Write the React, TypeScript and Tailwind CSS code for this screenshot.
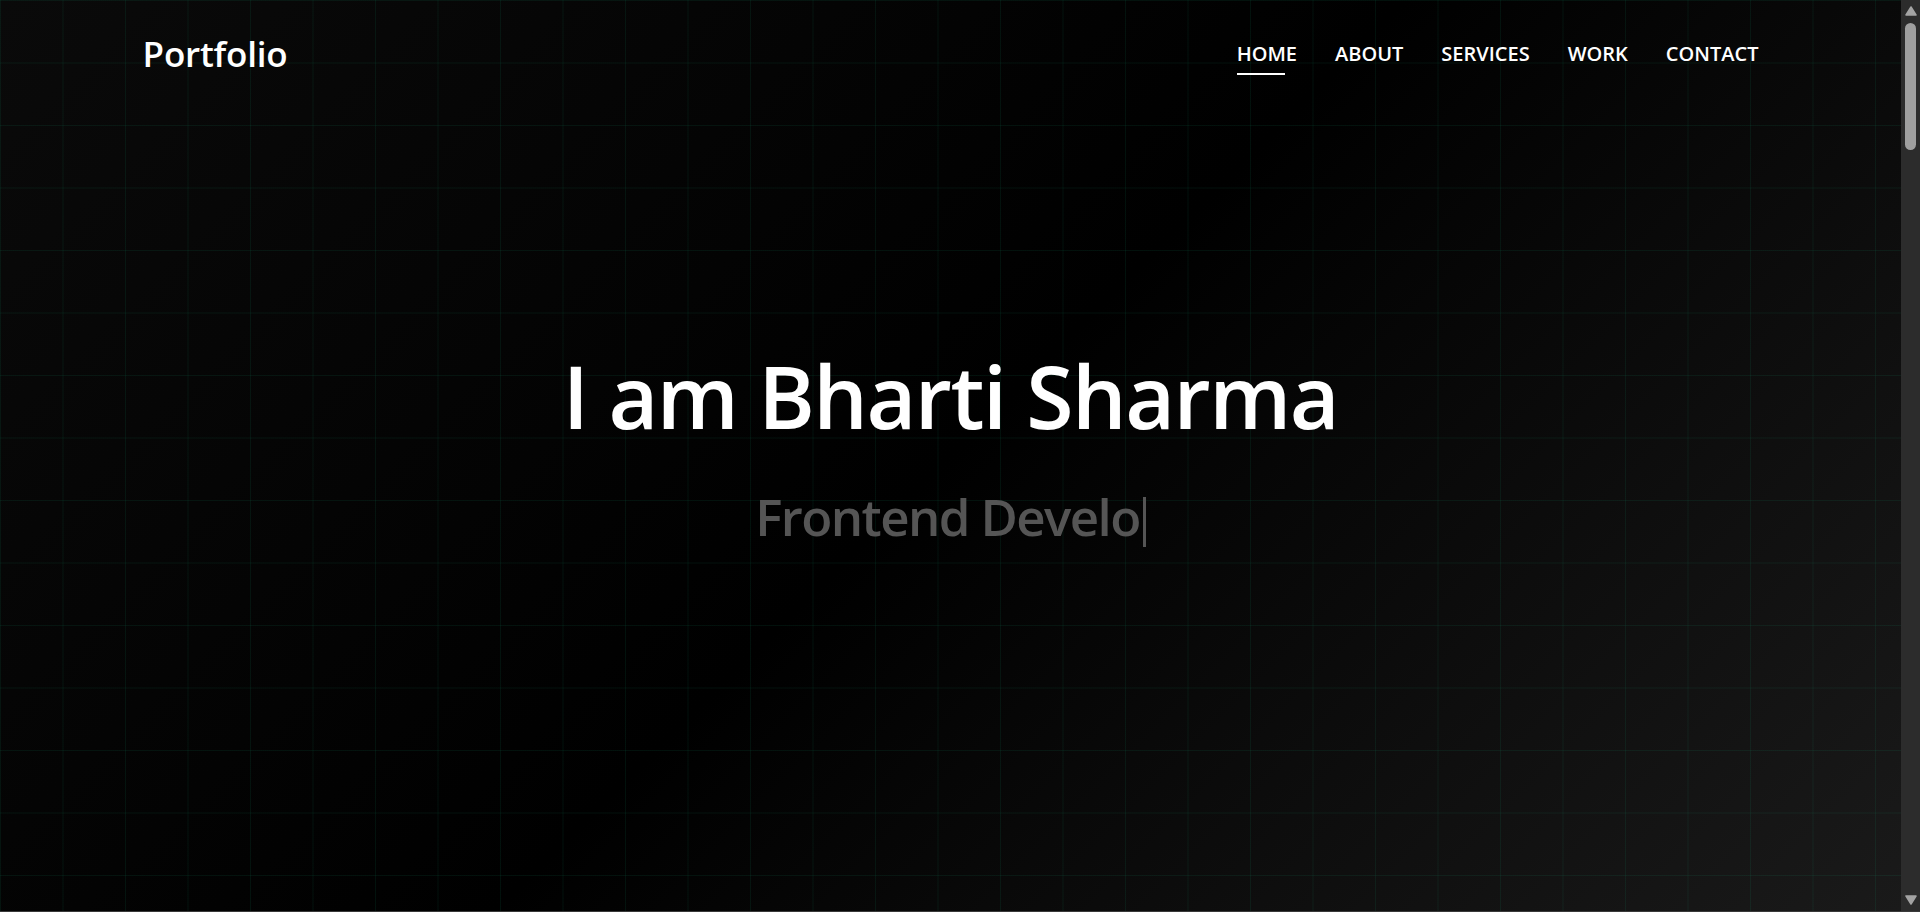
const navLinks = ["Home", "About", "Services", "Work", "Contact"];

function Header() {
  return (
    <header className="flex h-[108px] w-full items-center justify-between px-[7.5%]">
      <a href="#home" className="text-[35px] font-semibold tracking-[-0.2px] text-white">
        Portfolio
      </a>
      <nav>
        <ul className="flex items-center gap-[38px]">
          {navLinks.map((link, i) => (
            <li key={link}>
              <a
                href={`#${link.toLowerCase()}`}
                className="relative block text-[20px] font-semibold uppercase text-white"
              >
                {link}
                {i === 0 && (
                  <span className="absolute bottom-[-6px] left-0 h-[2px] w-[80%] bg-white" />
                )}
              </a>
            </li>
          ))}
        </ul>
      </nav>
    </header>
  );
}

function Hero() {
  return (
    <div className="flex flex-col items-center pt-[235px] text-center">
      <h1 className="text-[86px] font-semibold leading-[106px] tracking-[-1.5px] text-white">
        I am Bharti Sharma
      </h1>
      <p className="mt-[36px] text-[51px] font-semibold leading-[62px] tracking-[-1.6px] text-[#555555]">
        Frontend Develo
        <span className="ml-[3px] inline-block h-[50px] w-[3px] bg-[#555555] align-[-11px]" />
      </p>
    </div>
  );
}

// Windows-style scrollbar, as seen on the captured page
function Scrollbar() {
  return (
    <aside className="flex h-full w-[19px] shrink-0 flex-col items-center bg-[#2c2c2c] pb-[6px] pt-[6px]">
      <svg width="12" height="10" viewBox="0 0 12 10">
        <path d="M6 1 L11 9 L1 9 Z" fill="#a3a3a3" stroke="#a3a3a3" strokeLinejoin="round" strokeWidth="1.5" />
      </svg>
      <div className="mt-[7px] h-[127px] w-[11px] rounded-full bg-[#9f9f9f]" />
      <div className="flex-1" />
      <svg width="12" height="10" viewBox="0 0 12 10">
        <path d="M1 1 L11 1 L6 9 Z" fill="#a3a3a3" stroke="#a3a3a3" strokeLinejoin="round" strokeWidth="1.5" />
      </svg>
    </aside>
  );
}

export default function App() {
  return (
    <div className="flex h-screen w-full overflow-hidden border-b border-[#3a3a3a] bg-black font-['Open_Sans',sans-serif]">
      <section
        id="home"
        className="h-full min-w-0 flex-1 bg-[linear-gradient(rgba(16,185,129,0.09)_1px,transparent_1px),linear-gradient(90deg,rgba(16,185,129,0.09)_1px,transparent_1px),linear-gradient(135deg,#0a0a0a_0%,#000000_50%,#1a1a1a_100%)] bg-[size:62.5px_62.5px,62.5px_62.5px,100%_100%]"
      >
        <Header />
        <Hero />
      </section>
      <Scrollbar />
    </div>
  );
}
